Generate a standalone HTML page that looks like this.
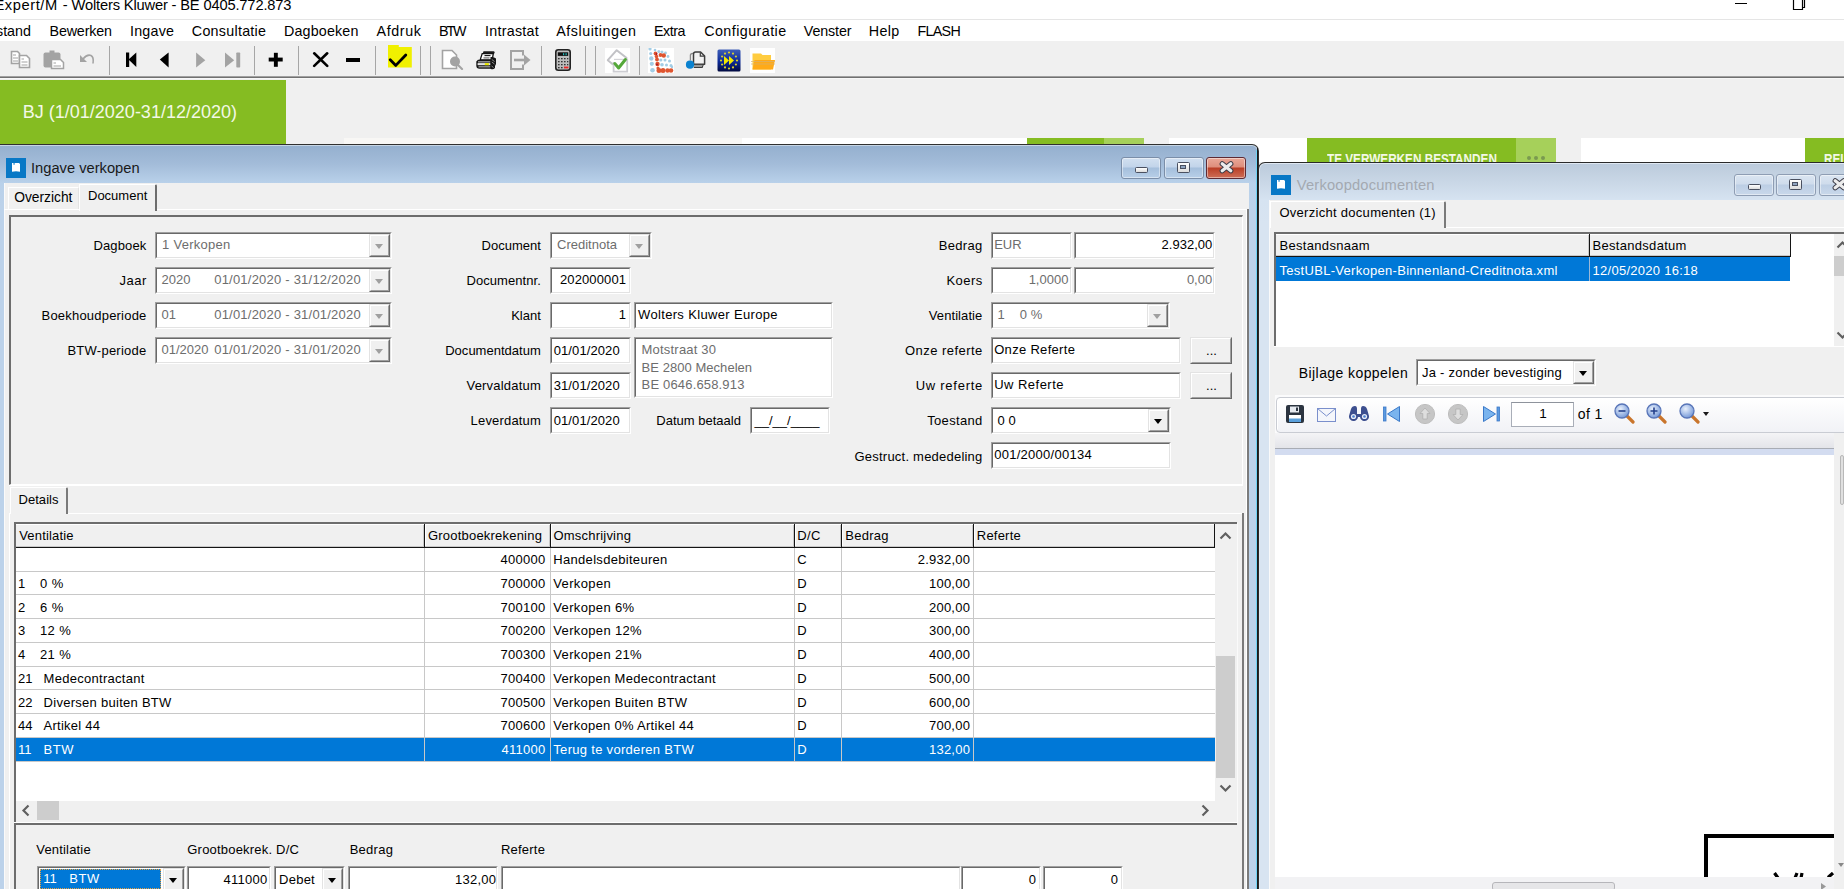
<!DOCTYPE html><html><head><meta charset="utf-8"><style>
*{margin:0;padding:0;box-sizing:border-box}
html,body{width:1844px;height:889px;overflow:hidden;background:#f0f0f0;position:relative;font-family:"Liberation Sans",sans-serif}
.t{position:absolute;white-space:nowrap;font-family:"Liberation Sans",sans-serif}
.r{position:absolute}
.sk{position:absolute;border-style:solid;border-width:1px;border-color:#a0a0a0 #fff #fff #a0a0a0}
.ski{position:absolute;left:0;top:0;right:0;bottom:0;border-style:solid;border-width:1px;border-color:#696969 #e3e3e3 #e3e3e3 #696969}
.rs{position:absolute;border-style:solid;border-width:1px;border-color:#e3e3e3 #696969 #696969 #e3e3e3}
.rsi{position:absolute;left:0;top:0;right:0;bottom:0;border-style:solid;border-width:1px;border-color:#fff #a0a0a0 #a0a0a0 #fff}
svg{position:absolute}
</style></head><body><div class="r" style="left:0px;top:0px;width:1844px;height:19px;background:#fff;"></div>
<div class="r" style="left:0px;top:19px;width:1844px;height:1px;background:#e5e5e5;"></div>
<div class="r" style="left:0px;top:20px;width:1844px;height:21px;background:#fff;"></div>
<div class="r" style="left:0px;top:41px;width:1844px;height:35px;background:#f0f0f0;"></div>
<div class="r" style="left:0px;top:76px;width:1844px;height:1px;background:#a0a0a0;"></div>
<div class="r" style="left:0px;top:77px;width:1844px;height:1px;background:#717171;"></div>
<div class="r" style="left:0px;top:78px;width:1844px;height:1px;background:#f7f7f7;"></div>
<div class="t" style="left:-5.5px;top:-2.44px;font-size:14.7px;line-height:14.7px;color:#000;font-weight:normal;letter-spacing:0.562px;">Expert/M</div>
<div class="t" style="left:62.8px;top:-2.44px;font-size:14.7px;line-height:14.7px;color:#000;font-weight:normal;letter-spacing:-0.162px;">- Wolters Kluwer - BE 0405.772.873</div>
<div class="r" style="left:1735px;top:3px;width:12px;height:1px;background:#000;"></div>
<svg style="left:1792px;top:0px" width="14" height="12"><path d="M1.5 -1 V9.5 H10.5 V-1 M10.5 7.5 H12.5 V-1" fill="none" stroke="#000" stroke-width="1.2"/></svg>
<div class="t" style="left:-4px;top:24.40px;font-size:14.3px;line-height:14.3px;color:#000;font-weight:normal;">stand</div>
<div class="t" style="left:49.5px;top:24.40px;font-size:14.3px;line-height:14.3px;color:#000;font-weight:normal;letter-spacing:-0.154px;">Bewerken</div>
<div class="t" style="left:130px;top:24.40px;font-size:14.3px;line-height:14.3px;color:#000;font-weight:normal;letter-spacing:0.215px;">Ingave</div>
<div class="t" style="left:191.8px;top:24.40px;font-size:14.3px;line-height:14.3px;color:#000;font-weight:normal;letter-spacing:0.267px;">Consultatie</div>
<div class="t" style="left:284px;top:24.40px;font-size:14.3px;line-height:14.3px;color:#000;font-weight:normal;letter-spacing:0.159px;">Dagboeken</div>
<div class="t" style="left:376.6px;top:24.40px;font-size:14.3px;line-height:14.3px;color:#000;font-weight:normal;letter-spacing:0.596px;">Afdruk</div>
<div class="t" style="left:439px;top:24.40px;font-size:14.3px;line-height:14.3px;color:#000;font-weight:normal;letter-spacing:-2.082px;">BTW</div>
<div class="t" style="left:485px;top:24.40px;font-size:14.3px;line-height:14.3px;color:#000;font-weight:normal;letter-spacing:0.256px;">Intrastat</div>
<div class="t" style="left:556.3px;top:24.40px;font-size:14.3px;line-height:14.3px;color:#000;font-weight:normal;letter-spacing:0.517px;">Afsluitingen</div>
<div class="t" style="left:654.1px;top:24.40px;font-size:14.3px;line-height:14.3px;color:#000;font-weight:normal;letter-spacing:-0.517px;">Extra</div>
<div class="t" style="left:704.2px;top:24.40px;font-size:14.3px;line-height:14.3px;color:#000;font-weight:normal;letter-spacing:0.446px;">Configuratie</div>
<div class="t" style="left:803.8px;top:24.40px;font-size:14.3px;line-height:14.3px;color:#000;font-weight:normal;letter-spacing:-0.130px;">Venster</div>
<div class="t" style="left:868.8px;top:24.40px;font-size:14.3px;line-height:14.3px;color:#000;font-weight:normal;letter-spacing:0.332px;">Help</div>
<div class="t" style="left:917.4px;top:24.40px;font-size:14.3px;line-height:14.3px;color:#000;font-weight:normal;letter-spacing:-0.670px;">FLASH</div>
<svg style="left:10px;top:50px" width="22" height="20" viewBox="0 0 22 20"><path d="M1.5 1.5 H7.5 L9.5 3.5 V13.5 H1.5 Z" fill="#fff" stroke="#a3a3a3" stroke-width="1.6"/><path d="M3 5 H6 M3 8 H8 M3 11 H8" stroke="#a3a3a3" stroke-width="1.2"/><path d="M9.5 5.5 H16.5 L19.5 8.5 V17.5 H9.5 Z" fill="#fff" stroke="#a3a3a3" stroke-width="1.6"/><path d="M11.5 9 H14 M11.5 12 H17.5 M11.5 15 H17.5" stroke="#a3a3a3" stroke-width="1.2"/></svg>
<svg style="left:42px;top:50px" width="23" height="20" viewBox="0 0 23 20"><rect x="1.5" y="2.5" width="17" height="15" rx="2" fill="#a3a3a3"/><rect x="7.5" y="0.5" width="5" height="3" fill="#a3a3a3"/><path d="M9.5 9.5 H18.5 L21.5 12.5 V18.5 H9.5 Z" fill="#fff" stroke="#a3a3a3" stroke-width="1.5"/><path d="M11.5 13 H14 M11.5 16 H19" stroke="#a3a3a3" stroke-width="1.2"/></svg>
<svg style="left:79px;top:53px" width="17" height="13" viewBox="0 0 17 13"><path d="M1 2 L1 9 L8 9 Z" fill="#a3a3a3"/><path d="M4 6 Q8 1 12 2.5 Q15 4 14 10.5" fill="none" stroke="#a3a3a3" stroke-width="1.6"/></svg>
<div class="r" style="left:109px;top:46px;width:1px;height:29px;background:#a6a6a6;"></div>
<svg style="left:125px;top:52px" width="13" height="16" viewBox="0 0 13 16"><rect x="1" y="0.5" width="3.2" height="14.5" fill="#000"/><path d="M3.5 7.5 L11.3 0.5 L11.3 15 Z" fill="#000"/></svg>
<svg style="left:159px;top:52px" width="11" height="16" viewBox="0 0 11 16"><path d="M0.8 7.6 L9.6 0.5 L9.6 15.6 Z" fill="#000"/></svg>
<svg style="left:195px;top:52px" width="11" height="16" viewBox="0 0 11 16"><path d="M1.1 0.5 L10.3 8.3 L1.1 15.6 Z" fill="#a3a3a3"/></svg>
<svg style="left:224px;top:52px" width="17" height="16" viewBox="0 0 17 16"><path d="M1 0.5 L10.2 8.2 L1 15.6 Z" fill="#a3a3a3"/><rect x="12.3" y="0.5" width="3.9" height="15" rx="0.8" fill="#a3a3a3"/></svg>
<div class="r" style="left:254px;top:46px;width:1px;height:29px;background:#a6a6a6;"></div>
<svg style="left:268px;top:52px" width="16" height="16" viewBox="0 0 16 16"><rect x="0.7" y="5.6" width="14" height="3.9" fill="#000"/><rect x="5.9" y="0.8" width="3.9" height="14" fill="#000"/></svg>
<div class="r" style="left:298px;top:46px;width:1px;height:29px;background:#a6a6a6;"></div>
<svg style="left:312px;top:51px" width="17" height="17" viewBox="0 0 17 17"><path d="M2.2 2.3 L15.2 14.9 M15.2 2.3 L2.2 14.9" stroke="#000" stroke-width="2.6" stroke-linecap="round"/></svg>
<div class="r" style="left:346px;top:57.6px;width:14px;height:4.4px;background:#000;"></div>
<div class="r" style="left:375px;top:46px;width:1px;height:29px;background:#a6a6a6;"></div>
<svg style="left:387px;top:44px" width="26" height="25" viewBox="0 0 26 25"><path d="M1 1 H11.8 V3 H24.8 V23.6 H1 Z" fill="#f0f000"/><path d="M3.2 15.8 L8.8 21.4 L18.8 11" fill="none" stroke="#000" stroke-width="2.8" stroke-linecap="round" stroke-linejoin="round"/></svg>
<div class="r" style="left:420px;top:46px;width:1px;height:29px;background:#a6a6a6;"></div>
<div class="r" style="left:430px;top:46px;width:1px;height:29px;background:#a6a6a6;"></div>
<svg style="left:441px;top:49px" width="23" height="21" viewBox="0 0 23 21"><path d="M1.5 1.5 H11 L15.5 6 V19.5 H1.5 Z" fill="#fff" stroke="#a3a3a3" stroke-width="1.6"/><circle cx="14" cy="12.5" r="5" fill="#a3a3a3"/><path d="M17 16 L21 20" stroke="#a3a3a3" stroke-width="2.2" stroke-linecap="round"/></svg>
<svg style="left:475px;top:49px" width="23" height="22" viewBox="0 0 23 22"><path d="M8.5 2.2 H18.5 Q19.6 2.2 19.6 3.6 L19 5 H7.5 Z" fill="#1a1a1a"/><path d="M7.2 4.6 H18.3 L17.2 10.8 H5.2 Z" fill="#fff" stroke="#111" stroke-width="1.3"/><path d="M9.5 6.6 H15.5" stroke="#111" stroke-width="1.1"/><path d="M8.5 8.9 H14.5" stroke="#777" stroke-width="1.3"/><path d="M3 10.8 H16.5 V19.7 H4.5 Q1.3 19.7 1.3 16.5 V12.5 Z" fill="#151515"/><rect x="3" y="12" width="12.5" height="1.6" fill="#8a8a8a"/><rect x="2.6" y="14.1" width="13" height="2.1" fill="#e4e4e4"/><rect x="9.8" y="14.1" width="4.1" height="2.1" fill="#e6e600"/><rect x="3.5" y="17" width="12" height="1.5" fill="#8a8a8a"/><path d="M15.5 8 Q19 7.5 21 9.5 V15 L20 17 V19 Q18 21 15.5 19.7 Z" fill="#151515"/><path d="M16.8 10.5 L19.5 12.5 M16.8 13 L19.5 15 M16.5 17 L18.5 18.5" stroke="#888" stroke-width="1"/></svg>
<svg style="left:509px;top:49px" width="23" height="22" viewBox="0 0 23 22"><path d="M14 6.5 V2 H2 V20 H14 V15.5" fill="none" stroke="#a3a3a3" stroke-width="2"/><path d="M5 11 H16" stroke="#a3a3a3" stroke-width="2.6"/><path d="M15 5.5 L21.5 11 L15 16.5 Z" fill="#a3a3a3"/></svg>
<div class="r" style="left:541px;top:46px;width:1px;height:29px;background:#a6a6a6;"></div>
<svg style="left:555px;top:49px" width="16" height="22" viewBox="0 0 16 22"><rect x="0.8" y="0.8" width="14.4" height="20.4" rx="2.5" fill="#bdbdbd" stroke="#222" stroke-width="1.6"/><rect x="2.8" y="3.3" width="10.4" height="3.6" fill="#111"/><rect x="8" y="4.2" width="1.2" height="2" fill="#2bb"/><rect x="10.5" y="4.2" width="1.2" height="2" fill="#2bb"/><g fill="#333"><rect x="3" y="9" width="1.6" height="1.3"/><rect x="6" y="9" width="1.6" height="1.3"/><rect x="9" y="9" width="1.6" height="1.3"/><rect x="12" y="9" width="1.3" height="1.3"/><rect x="3" y="12" width="1.6" height="1.3"/><rect x="6" y="12" width="1.6" height="1.3"/><rect x="9" y="12" width="1.6" height="1.3"/><rect x="12" y="12" width="1.3" height="1.3"/><rect x="3" y="15" width="1.6" height="1.3"/><rect x="6" y="15" width="1.6" height="1.3"/><rect x="9" y="15" width="1.6" height="1.3"/><rect x="12" y="15" width="1.3" height="1.3"/><rect x="3" y="18" width="1.6" height="1.3"/><rect x="6" y="18" width="1.6" height="1.3"/></g><rect x="9" y="17.6" width="4.4" height="1.8" fill="#e22"/></svg>
<div class="r" style="left:585px;top:46px;width:1px;height:29px;background:#a6a6a6;"></div>
<div class="r" style="left:595px;top:46px;width:1px;height:29px;background:#a6a6a6;"></div>
<div class="r" style="left:605px;top:48px;width:25px;height:25px;background:#fff;"></div>
<svg style="left:605px;top:48px" width="25" height="25" viewBox="0 0 25 25"><path d="M8 16.5 L2.8 12.2 L11.7 2.2 L22 10.3" fill="none" stroke="#c2c2c6" stroke-width="2" stroke-linejoin="round"/><path d="M9 11.4 H22" stroke="#d4d4d8" stroke-width="1.2"/><path d="M8.6 14 V23.6 H22.2 V10.6" fill="none" stroke="#cdcdd2" stroke-width="1.8"/><path d="M9.8 15.6 L13.6 20 L20.4 11.5" fill="none" stroke="#55a83a" stroke-width="3" stroke-linecap="round" stroke-linejoin="round"/></svg>
<div class="r" style="left:639px;top:46px;width:1px;height:29px;background:#a6a6a6;"></div>
<div class="r" style="left:648px;top:48px;width:26px;height:25px;background:#fff;"></div>
<svg style="left:648px;top:48px" width="26" height="25" viewBox="0 0 26 25"><circle cx="2.0" cy="1.0" r="1.6" fill="#a3cde5"/><circle cx="2.7" cy="5.5" r="1.6" fill="#a3cde5"/><circle cx="3.3" cy="10.5" r="2.2" fill="#a3cde5"/><circle cx="3.8" cy="15.8" r="2.1" fill="#a3cde5"/><circle cx="4.5" cy="22.2" r="2.3" fill="#a3cde5"/><circle cx="7.0" cy="2.0" r="1.3" fill="#a3cde5"/><circle cx="10.8" cy="3.5" r="1.5" fill="#a3cde5"/><circle cx="14.0" cy="4.0" r="1.5" fill="#a3cde5"/><circle cx="17.5" cy="5.0" r="1.4" fill="#a3cde5"/><circle cx="20.0" cy="8.5" r="1.4" fill="#a3cde5"/><circle cx="21.5" cy="13.0" r="1.5" fill="#a3cde5"/><circle cx="23.0" cy="17.5" r="1.5" fill="#a3cde5"/><circle cx="12.8" cy="12.0" r="1.6" fill="#a3cde5"/><circle cx="17.0" cy="12.0" r="1.5" fill="#a3cde5"/><circle cx="14.0" cy="16.8" r="1.8" fill="#a3cde5"/><circle cx="18.5" cy="17.0" r="1.5" fill="#a3cde5"/><circle cx="24.0" cy="19.0" r="1.2" fill="#a3cde5"/><circle cx="7.5" cy="5.5" r="1.9" fill="#df5530"/><circle cx="8.5" cy="8.5" r="1.8" fill="#df5530"/><circle cx="9.0" cy="11.5" r="1.9" fill="#df5530"/><circle cx="9.5" cy="16.0" r="2.2" fill="#df5530"/><circle cx="10.0" cy="20.0" r="1.6" fill="#df5530"/><circle cx="12.5" cy="7.0" r="1.9" fill="#df5530"/><circle cx="15.8" cy="7.5" r="2.2" fill="#df5530"/><circle cx="11.0" cy="22.5" r="2.5" fill="#df5530"/><circle cx="15.0" cy="22.5" r="2.5" fill="#df5530"/><circle cx="19.5" cy="22.5" r="2.2" fill="#df5530"/><circle cx="23.0" cy="22.5" r="2.3" fill="#df5530"/><circle cx="8.5" cy="6" r="0.9" fill="#a8182a"/><circle cx="9" cy="16.5" r="1" fill="#a8182a"/></svg>
<svg style="left:684px;top:49px" width="23" height="21" viewBox="0 0 23 21"><path d="M6.4 11.5 V6.5 Q6.4 4.3 8.6 4.3 H9.5" fill="none" stroke="#8a8a8a" stroke-width="1.3"/><path d="M9.5 15.2 V5.2 Q9.5 3 11.7 3 H16.6 L20.6 7 V15.2 Z" fill="#f2f2f2" stroke="#3c3c3c" stroke-width="1.5" stroke-linejoin="round"/><path d="M16.3 3.4 V7.2 H20.3" fill="none" stroke="#3c3c3c" stroke-width="1.2"/><rect x="10" y="15.9" width="8.6" height="2.4" fill="#9a9a9a"/><path d="M9.8 18.5 H18.2 L19.2 15.9" fill="none" stroke="#3c3c3c" stroke-width="1.1"/><circle cx="6" cy="15.7" r="4.1" fill="#0a82d0"/></svg>
<svg style="left:717px;top:49px" width="24" height="23" viewBox="0 0 24 23"><defs><linearGradient id="eug" x1="0" y1="0" x2="0" y2="1"><stop offset="0" stop-color="#3f5fb8"/><stop offset="0.55" stop-color="#0b2a98"/><stop offset="1" stop-color="#020a40"/></linearGradient></defs><rect x="0.5" y="0.5" width="23" height="22" rx="1.5" fill="url(#eug)"/><circle cx="20.00" cy="11.50" r="1.1" fill="#d8cf30"/><circle cx="18.93" cy="15.50" r="1.1" fill="#d8cf30"/><circle cx="16.00" cy="18.43" r="1.1" fill="#d8cf30"/><circle cx="12.00" cy="19.50" r="1.1" fill="#d8cf30"/><circle cx="8.00" cy="18.43" r="1.1" fill="#d8cf30"/><circle cx="5.07" cy="15.50" r="1.1" fill="#d8cf30"/><circle cx="4.00" cy="11.50" r="1.1" fill="#d8cf30"/><circle cx="5.07" cy="7.50" r="1.1" fill="#d8cf30"/><circle cx="8.00" cy="4.57" r="1.1" fill="#d8cf30"/><circle cx="12.00" cy="3.50" r="1.1" fill="#d8cf30"/><circle cx="16.00" cy="4.57" r="1.1" fill="#d8cf30"/><circle cx="18.93" cy="7.50" r="1.1" fill="#d8cf30"/><path d="M7 7 L12 11.5 L7 16 Z M12 7 L17 11.5 L12 16 Z" fill="#f2e800"/></svg>
<div class="r" style="left:750px;top:48px;width:25px;height:25px;background:#fff;"></div>
<svg style="left:750px;top:48px" width="25" height="25" viewBox="0 0 25 25"><path d="M2.5 5.5 H11 L12.5 7 H21 V21.5 H2.5 Z" fill="#ffcc40"/><path d="M4.5 12 H25 L23 21.5 H2.5 Z" fill="#ffaa18"/><path d="M1 13.5 H25 M1 16 H25" stroke="#d8b070" stroke-width="1" opacity="0.7"/></svg>
<div class="r" style="left:0px;top:80px;width:286px;height:64px;background:#85bc22;"></div>
<div class="t" style="left:22.8px;top:103.16px;font-size:18px;line-height:18px;color:#f3f8e6;font-weight:normal;">BJ (1/01/2020-31/12/2020)</div>
<div class="r" style="left:344px;top:138px;width:398px;height:6px;background:#f8f7f5;"></div>
<div class="r" style="left:742px;top:138px;width:285px;height:6px;background:#fff;"></div>
<div class="r" style="left:1027px;top:138px;width:77px;height:6px;background:#85bc22;"></div>
<div class="r" style="left:1104px;top:138px;width:40px;height:6px;background:#a6d05a;"></div>
<div class="r" style="left:1169px;top:138px;width:138px;height:24px;background:#fff;"></div>
<div class="r" style="left:1307px;top:138px;width:209px;height:24px;background:#85bc22;"></div>
<div class="r" style="left:1516px;top:138px;width:40px;height:24px;background:#a6d05a;"></div>
<div class="r" style="left:1581px;top:138px;width:224px;height:24px;background:#fff;"></div>
<div class="r" style="left:1805px;top:138px;width:39px;height:24px;background:#85bc22;"></div>
<div class="t" style="left:1326.5px;top:150.80px;font-size:15px;line-height:15px;color:#f3f8e6;font-weight:bold;transform:scaleX(0.783);transform-origin:0 0">TE VERWERKEN BESTANDEN</div>
<div class="t" style="left:1824px;top:150.80px;font-size:15px;line-height:15px;color:#f3f8e6;font-weight:bold;transform:scaleX(0.783);transform-origin:0 0">REI</div>
<div class="r" style="left:1526.5px;top:155.5px;width:4.6px;height:4.6px;background:#7a9a50;border-radius:50%"></div>
<div class="r" style="left:1533.5px;top:155.5px;width:4.6px;height:4.6px;background:#7a9a50;border-radius:50%"></div>
<div class="r" style="left:1540.5px;top:155.5px;width:4.6px;height:4.6px;background:#7a9a50;border-radius:50%"></div>
<div class="r" style="left:-10px;top:144px;width:1269px;height:760px;background:#303030;border-radius:0 7px 0 0"></div>
<div class="r" style="left:-9px;top:145px;width:1267px;height:760px;background:#c6d5e4;border-radius:0 6px 0 0"></div>
<div class="r" style="left:-9px;top:146px;width:1266px;height:760px;background:linear-gradient(#95b0cf 0px,#a3bcd9 18px,#b9d1ea 37px,#bcd2ea 60px);border-radius:0 5px 0 0"></div>
<div class="r" style="left:1256px;top:150px;width:1px;height:739px;background:#6fd3f5;"></div>
<div class="r" style="left:1257px;top:148px;width:1px;height:741px;background:#1a1a1a;"></div>
<div class="r" style="left:4px;top:183px;width:1245px;height:706px;background:#f0f0f0;"></div>
<div class="r" style="left:4px;top:183px;width:1px;height:706px;background:#fafafa;"></div>
<div class="r" style="left:1247px;top:209px;width:2px;height:680px;background:#7c7c7c;"></div>
<div class="r" style="left:1246px;top:210px;width:1px;height:679px;background:#fff;"></div>
<div class="r" style="left:6px;top:158px;width:20px;height:20px;background:#0878c6;"></div>
<svg style="left:12px;top:163px" width="9" height="10"><path d="M0 0 H1.5 V1.8 H2.6 V0 H7 L8 1 V8.8 Q4 7.6 0 8.8 Z" fill="#fff"/></svg>
<div class="t" style="left:31px;top:161.06px;font-size:14.7px;line-height:14.7px;color:#1a1a1a;font-weight:normal;">Ingave verkopen</div>
<div class="r" style="left:1121px;top:157px;width:40px;height:22px;background:linear-gradient(#d2e0f0 0%,#c2d4ea 45%,#a5bfdc 50%,#b8cfe8 100%);border:1px solid #7b8ea8;border-radius:3px;box-shadow:inset 0 0 0 1px rgba(255,255,255,0.45)"></div>
<div class="r" style="left:1134.5px;top:166.7px;width:13.5px;height:6px;background:linear-gradient(#fff,#dcdcdc);border:1.3px solid #4a5060;border-radius:1.5px"></div>
<div class="r" style="left:1164px;top:157px;width:40px;height:22px;background:linear-gradient(#d2e0f0 0%,#c2d4ea 45%,#a5bfdc 50%,#b8cfe8 100%);border:1px solid #7b8ea8;border-radius:3px;box-shadow:inset 0 0 0 1px rgba(255,255,255,0.45)"></div>
<div class="r" style="left:1176.5px;top:161.8px;width:13.5px;height:10.8px;background:linear-gradient(#fff,#dcdcdc);border:1.3px solid #4a5060;border-radius:1.5px"></div>
<div class="r" style="left:1179.8px;top:165.2px;width:6.5px;height:3.6px;background:#8fa4c0;border:1px solid #4a5060"></div>
<div class="r" style="left:1206px;top:157px;width:40px;height:22px;background:linear-gradient(#eaa898 0%,#de8e7c 45%,#ba3e26 50%,#cd6e58 100%);border:1px solid #5e2a34;border-radius:3px;box-shadow:inset 0 0 0 1px rgba(255,255,255,0.45)"></div>
<svg style="left:1217.5px;top:161.0px" width="17" height="13"><path d="M4.2 2.8 L12.8 9.8 M12.8 2.8 L4.2 9.8" stroke="#3c3c48" stroke-width="5.2" stroke-linecap="round"/><path d="M4.2 2.8 L12.8 9.8 M12.8 2.8 L4.2 9.8" stroke="#ececec" stroke-width="3.2" stroke-linecap="round"/></svg>
<div class="r" style="left:4px;top:209px;width:1243px;height:1px;background:#fff;"></div>
<div class="r" style="left:8px;top:187px;width:71px;height:22px;border-left:1px solid #fff;border-top:1px solid #fff;border-right:1px solid #e3e3e3;background:#f0f0f0"></div>
<div class="t" style="left:14.2px;top:191.02px;font-size:13.8px;line-height:13.8px;color:#000;font-weight:normal;">Overzicht</div>
<div class="r" style="left:79px;top:184px;width:78px;height:27px;border-left:1px solid #fff;border-top:1px solid #fff;border-right:2px solid #6d6d6d;background:#f0f0f0;border-radius:0 2px 0 0"></div>
<div class="t" style="left:88px;top:189.00px;font-size:13px;line-height:13px;color:#000;font-weight:normal;">Document</div>
<div class="r" style="left:9px;top:215px;width:1234px;height:270px;border-left:2px solid #6d6d6d;border-top:2px solid #6d6d6d;border-right:1px solid #fff;border-bottom:1px solid #fff"></div>
<div class="t" style="right:1697.7px;top:239.00px;font-size:13px;line-height:13px;color:#000;font-weight:normal;letter-spacing:0.127px;margin-right:-0.127px;">Dagboek</div>
<div class="t" style="right:1697.7px;top:274.00px;font-size:13px;line-height:13px;color:#000;font-weight:normal;letter-spacing:0.504px;margin-right:-0.504px;">Jaar</div>
<div class="t" style="right:1697.7px;top:309.00px;font-size:13px;line-height:13px;color:#000;font-weight:normal;letter-spacing:0.206px;margin-right:-0.206px;">Boekhoudperiode</div>
<div class="t" style="right:1697.7px;top:344.00px;font-size:13px;line-height:13px;color:#000;font-weight:normal;letter-spacing:0.256px;margin-right:-0.256px;">BTW-periode</div>
<div class="sk" style="left:155px;top:232px;width:237px;height:27px;background:#fff"><div class="ski"></div></div>
<div class="rs" style="left:369px;top:234px;width:21px;height:23px;background:#f0f0f0"><div class="rsi"></div></div>
<div class="r" style="left:374.5px;top:243.5px;width:0;height:0;border-left:4.5px solid transparent;border-right:4.5px solid transparent;border-top:5px solid #a0a0a0"></div>
<div class="sk" style="left:155px;top:267px;width:237px;height:27px;background:#fff"><div class="ski"></div></div>
<div class="rs" style="left:369px;top:269px;width:21px;height:23px;background:#f0f0f0"><div class="rsi"></div></div>
<div class="r" style="left:374.5px;top:278.5px;width:0;height:0;border-left:4.5px solid transparent;border-right:4.5px solid transparent;border-top:5px solid #a0a0a0"></div>
<div class="sk" style="left:155px;top:302px;width:237px;height:27px;background:#fff"><div class="ski"></div></div>
<div class="rs" style="left:369px;top:304px;width:21px;height:23px;background:#f0f0f0"><div class="rsi"></div></div>
<div class="r" style="left:374.5px;top:313.5px;width:0;height:0;border-left:4.5px solid transparent;border-right:4.5px solid transparent;border-top:5px solid #a0a0a0"></div>
<div class="sk" style="left:155px;top:337px;width:237px;height:27px;background:#fff"><div class="ski"></div></div>
<div class="rs" style="left:369px;top:339px;width:21px;height:23px;background:#f0f0f0"><div class="rsi"></div></div>
<div class="r" style="left:374.5px;top:348.5px;width:0;height:0;border-left:4.5px solid transparent;border-right:4.5px solid transparent;border-top:5px solid #a0a0a0"></div>
<div class="t" style="left:162px;top:238.00px;font-size:13px;line-height:13px;color:#6d6d6d;font-weight:normal;letter-spacing:0.281px;">1 Verkopen</div>
<div class="t" style="left:161.5px;top:273.00px;font-size:13px;line-height:13px;color:#6d6d6d;font-weight:normal;">2020</div>
<div class="t" style="left:214.2px;top:273.00px;font-size:13px;line-height:13px;color:#6d6d6d;font-weight:normal;letter-spacing:0.219px;">01/01/2020 - 31/12/2020</div>
<div class="t" style="left:161.5px;top:308.00px;font-size:13px;line-height:13px;color:#6d6d6d;font-weight:normal;">01</div>
<div class="t" style="left:214.2px;top:308.00px;font-size:13px;line-height:13px;color:#6d6d6d;font-weight:normal;letter-spacing:0.219px;">01/01/2020 - 31/01/2020</div>
<div class="t" style="left:161.5px;top:343.00px;font-size:13px;line-height:13px;color:#6d6d6d;font-weight:normal;">01/2020</div>
<div class="t" style="left:214.2px;top:343.00px;font-size:13px;line-height:13px;color:#6d6d6d;font-weight:normal;letter-spacing:0.219px;">01/01/2020 - 31/01/2020</div>
<div class="t" style="right:1303.2px;top:239.00px;font-size:13px;line-height:13px;color:#000;font-weight:normal;">Document</div>
<div class="t" style="right:1303.2px;top:274.00px;font-size:13px;line-height:13px;color:#000;font-weight:normal;letter-spacing:0.060px;margin-right:-0.060px;">Documentnr.</div>
<div class="t" style="right:1303.2px;top:309.00px;font-size:13px;line-height:13px;color:#000;font-weight:normal;">Klant</div>
<div class="t" style="right:1303.2px;top:344.00px;font-size:13px;line-height:13px;color:#000;font-weight:normal;letter-spacing:0.018px;margin-right:-0.018px;">Documentdatum</div>
<div class="t" style="right:1303.2px;top:379.00px;font-size:13px;line-height:13px;color:#000;font-weight:normal;letter-spacing:0.204px;margin-right:-0.204px;">Vervaldatum</div>
<div class="t" style="right:1303.2px;top:414.00px;font-size:13px;line-height:13px;color:#000;font-weight:normal;letter-spacing:0.172px;margin-right:-0.172px;">Leverdatum</div>
<div class="sk" style="left:550px;top:232px;width:102px;height:27px;background:#fff"><div class="ski"></div></div>
<div class="rs" style="left:629px;top:234px;width:21px;height:23px;background:#f0f0f0"><div class="rsi"></div></div>
<div class="r" style="left:634.5px;top:243.5px;width:0;height:0;border-left:4.5px solid transparent;border-right:4.5px solid transparent;border-top:5px solid #a0a0a0"></div>
<div class="t" style="left:557px;top:238.20px;font-size:13px;line-height:13px;color:#6d6d6d;font-weight:normal;">Creditnota</div>
<div class="sk" style="left:550px;top:267px;width:81px;height:27px;background:#fff"><div class="ski"></div></div>
<div class="t" style="right:1218px;top:273.20px;font-size:13px;line-height:13px;color:#000;font-weight:normal;letter-spacing:0.116px;margin-right:-0.116px;">202000001</div>
<div class="sk" style="left:550px;top:302px;width:81px;height:27px;background:#fff"><div class="ski"></div></div>
<div class="t" style="right:1218px;top:308.20px;font-size:13px;line-height:13px;color:#000;font-weight:normal;">1</div>
<div class="sk" style="left:634px;top:302px;width:199px;height:27px;background:#fff"><div class="ski"></div></div>
<div class="t" style="left:638px;top:308.00px;font-size:13px;line-height:13px;color:#000;font-weight:normal;letter-spacing:0.340px;">Wolters Kluwer Europe</div>
<div class="sk" style="left:550px;top:337px;width:81px;height:27px;background:#fff"><div class="ski"></div></div>
<div class="t" style="left:553.7px;top:343.50px;font-size:13px;line-height:13px;color:#000;font-weight:normal;letter-spacing:0.104px;">01/01/2020</div>
<div class="sk" style="left:634px;top:337px;width:199px;height:61px;background:#fff"><div class="ski"></div></div>
<div class="t" style="left:641.6px;top:343.40px;font-size:13px;line-height:13px;color:#6d6d6d;font-weight:normal;letter-spacing:0.195px;">Motstraat 30</div>
<div class="t" style="left:641.6px;top:360.50px;font-size:13px;line-height:13px;color:#6d6d6d;font-weight:normal;letter-spacing:0.043px;">BE 2800 Mechelen</div>
<div class="t" style="left:641.6px;top:377.80px;font-size:13px;line-height:13px;color:#6d6d6d;font-weight:normal;letter-spacing:0.166px;">BE 0646.658.913</div>
<div class="sk" style="left:550px;top:372px;width:81px;height:27px;background:#fff"><div class="ski"></div></div>
<div class="t" style="left:553.7px;top:378.50px;font-size:13px;line-height:13px;color:#000;font-weight:normal;letter-spacing:0.104px;">31/01/2020</div>
<div class="sk" style="left:550px;top:407px;width:81px;height:27px;background:#fff"><div class="ski"></div></div>
<div class="t" style="left:553.7px;top:413.50px;font-size:13px;line-height:13px;color:#000;font-weight:normal;letter-spacing:0.104px;">01/01/2020</div>
<div class="t" style="right:1103.1px;top:414.00px;font-size:13px;line-height:13px;color:#000;font-weight:normal;">Datum betaald</div>
<div class="sk" style="left:750px;top:407px;width:80px;height:27px;background:#fff"><div class="ski"></div></div>
<div class="t" style="left:754.5px;top:413.50px;font-size:13px;line-height:13px;color:#000;font-weight:normal;">__/__/____</div>
<div class="t" style="right:861.7px;top:239.00px;font-size:13px;line-height:13px;color:#000;font-weight:normal;letter-spacing:0.336px;margin-right:-0.336px;">Bedrag</div>
<div class="t" style="right:861.7px;top:274.00px;font-size:13px;line-height:13px;color:#000;font-weight:normal;letter-spacing:0.485px;margin-right:-0.485px;">Koers</div>
<div class="t" style="right:861.7px;top:309.00px;font-size:13px;line-height:13px;color:#000;font-weight:normal;letter-spacing:0.082px;margin-right:-0.082px;">Ventilatie</div>
<div class="t" style="right:861.7px;top:344.00px;font-size:13px;line-height:13px;color:#000;font-weight:normal;letter-spacing:0.459px;margin-right:-0.459px;">Onze referte</div>
<div class="t" style="right:861.7px;top:379.00px;font-size:13px;line-height:13px;color:#000;font-weight:normal;letter-spacing:0.738px;margin-right:-0.738px;">Uw referte</div>
<div class="t" style="right:861.7px;top:414.00px;font-size:13px;line-height:13px;color:#000;font-weight:normal;letter-spacing:0.334px;margin-right:-0.334px;">Toestand</div>
<div class="t" style="right:861.7px;top:449.50px;font-size:13px;line-height:13px;color:#000;font-weight:normal;letter-spacing:0.223px;margin-right:-0.223px;">Gestruct. mededeling</div>
<div class="sk" style="left:991px;top:232px;width:81px;height:27px;background:#fff"><div class="ski"></div></div>
<div class="t" style="left:994.2px;top:238.00px;font-size:13px;line-height:13px;color:#6d6d6d;font-weight:normal;">EUR</div>
<div class="sk" style="left:1074px;top:232px;width:141px;height:27px;background:#fff"><div class="ski"></div></div>
<div class="t" style="right:631.8px;top:238.20px;font-size:13px;line-height:13px;color:#000;font-weight:normal;">2.932,00</div>
<div class="sk" style="left:991px;top:267px;width:81px;height:27px;background:#fff"><div class="ski"></div></div>
<div class="t" style="right:775.5999999999999px;top:273.20px;font-size:13px;line-height:13px;color:#6d6d6d;font-weight:normal;">1,0000</div>
<div class="sk" style="left:1074px;top:267px;width:141px;height:27px;background:#fff"><div class="ski"></div></div>
<div class="t" style="right:631.8px;top:273.20px;font-size:13px;line-height:13px;color:#6d6d6d;font-weight:normal;">0,00</div>
<div class="sk" style="left:991px;top:302px;width:179px;height:27px;background:#fff"><div class="ski"></div></div>
<div class="rs" style="left:1147px;top:304px;width:21px;height:23px;background:#f0f0f0"><div class="rsi"></div></div>
<div class="r" style="left:1152.5px;top:313.5px;width:0;height:0;border-left:4.5px solid transparent;border-right:4.5px solid transparent;border-top:5px solid #a0a0a0"></div>
<div class="t" style="left:997.6px;top:308.20px;font-size:13px;line-height:13px;color:#6d6d6d;font-weight:normal;">1</div>
<div class="t" style="left:1019.8px;top:308.20px;font-size:13px;line-height:13px;color:#6d6d6d;font-weight:normal;">0 %</div>
<div class="sk" style="left:991px;top:337px;width:190px;height:27px;background:#fff"><div class="ski"></div></div>
<div class="t" style="left:994.2px;top:343.20px;font-size:13px;line-height:13px;color:#000;font-weight:normal;letter-spacing:0.308px;">Onze Referte</div>
<div class="rs" style="left:1190px;top:337px;width:42px;height:27px;background:#f0f0f0"><div class="rsi"></div></div>
<div class="t" style="left:1211.5px;transform:translateX(-50%);top:343.50px;font-size:13px;line-height:13px;color:#000;font-weight:normal;">...</div>
<div class="sk" style="left:991px;top:372px;width:190px;height:27px;background:#fff"><div class="ski"></div></div>
<div class="t" style="left:994.2px;top:378.20px;font-size:13px;line-height:13px;color:#000;font-weight:normal;letter-spacing:0.476px;">Uw Referte</div>
<div class="rs" style="left:1190px;top:372px;width:42px;height:27px;background:#f0f0f0"><div class="rsi"></div></div>
<div class="t" style="left:1211.5px;transform:translateX(-50%);top:378.50px;font-size:13px;line-height:13px;color:#000;font-weight:normal;">...</div>
<div class="sk" style="left:991px;top:407px;width:180px;height:27px;background:#fff"><div class="ski"></div></div>
<div class="rs" style="left:1148px;top:409px;width:21px;height:23px;background:#f0f0f0"><div class="rsi"></div></div>
<div class="r" style="left:1153.5px;top:418.5px;width:0;height:0;border-left:4.5px solid transparent;border-right:4.5px solid transparent;border-top:5px solid #000"></div>
<div class="t" style="left:997.6px;top:414.00px;font-size:13px;line-height:13px;color:#000;font-weight:normal;">0 0</div>
<div class="sk" style="left:991px;top:442px;width:180px;height:27px;background:#fff"><div class="ski"></div></div>
<div class="t" style="left:994.2px;top:448.40px;font-size:13px;line-height:13px;color:#000;font-weight:normal;letter-spacing:0.271px;">001/2000/00134</div>
<div class="r" style="left:9px;top:485px;width:1234px;height:1px;background:#fff;"></div>
<div class="r" style="left:10px;top:487px;width:58px;height:27px;border-left:1px solid #fff;border-top:1px solid #fff;border-right:2px solid #7a7a7a;border-radius:0 2px 0 0;background:#f0f0f0"></div>
<div class="t" style="left:18.5px;top:493.00px;font-size:13px;line-height:13px;color:#000;font-weight:normal;letter-spacing:0.044px;">Details</div>
<div class="r" style="left:68px;top:513px;width:1175px;height:1px;background:#fff;"></div>
<div class="r" style="left:9px;top:513px;width:1px;height:376px;background:#fff;"></div>
<div class="r" style="left:1242px;top:513px;width:2px;height:376px;background:#7a7a7a;"></div>
<div class="r" style="left:1237px;top:523px;width:1px;height:300px;background:#fafafa;"></div>
<div class="r" style="left:14px;top:522px;width:1223px;height:301px;border-left:2px solid #6d6d6d;border-top:2px solid #6d6d6d;background:#fff"></div>
<div class="r" style="left:16px;top:524px;width:1199px;height:23px;background:#f0f0f0;"></div>
<div class="r" style="left:16px;top:524px;width:1199px;height:1px;background:#fff;"></div>
<div class="r" style="left:16px;top:546px;width:1199px;height:1px;background:#c8c8c8;"></div>
<div class="r" style="left:16px;top:547px;width:1199px;height:1px;background:#141414;"></div>
<div class="r" style="left:424px;top:524px;width:1px;height:23px;background:#141414;"></div>
<div class="r" style="left:423px;top:525px;width:1px;height:21px;background:#c8c8c8;"></div>
<div class="r" style="left:425px;top:525px;width:1px;height:21px;background:#fff;"></div>
<div class="r" style="left:550px;top:524px;width:1px;height:23px;background:#141414;"></div>
<div class="r" style="left:549px;top:525px;width:1px;height:21px;background:#c8c8c8;"></div>
<div class="r" style="left:551px;top:525px;width:1px;height:21px;background:#fff;"></div>
<div class="r" style="left:794px;top:524px;width:1px;height:23px;background:#141414;"></div>
<div class="r" style="left:793px;top:525px;width:1px;height:21px;background:#c8c8c8;"></div>
<div class="r" style="left:795px;top:525px;width:1px;height:21px;background:#fff;"></div>
<div class="r" style="left:841px;top:524px;width:1px;height:23px;background:#141414;"></div>
<div class="r" style="left:840px;top:525px;width:1px;height:21px;background:#c8c8c8;"></div>
<div class="r" style="left:842px;top:525px;width:1px;height:21px;background:#fff;"></div>
<div class="r" style="left:973px;top:524px;width:1px;height:23px;background:#141414;"></div>
<div class="r" style="left:972px;top:525px;width:1px;height:21px;background:#c8c8c8;"></div>
<div class="r" style="left:974px;top:525px;width:1px;height:21px;background:#fff;"></div>
<div class="r" style="left:1214px;top:524px;width:1px;height:23px;background:#141414;"></div>
<div class="t" style="left:19.2px;top:529.00px;font-size:13px;line-height:13px;color:#000;font-weight:normal;letter-spacing:0.176px;">Ventilatie</div>
<div class="t" style="left:428px;top:529.00px;font-size:13px;line-height:13px;color:#000;font-weight:normal;letter-spacing:0.207px;">Grootboekrekening</div>
<div class="t" style="left:553.5px;top:529.00px;font-size:13px;line-height:13px;color:#000;font-weight:normal;letter-spacing:0.205px;">Omschrijving</div>
<div class="t" style="left:797.3px;top:529.00px;font-size:13px;line-height:13px;color:#000;font-weight:normal;letter-spacing:0.336px;">D/C</div>
<div class="t" style="left:845.3px;top:529.00px;font-size:13px;line-height:13px;color:#000;font-weight:normal;letter-spacing:0.252px;">Bedrag</div>
<div class="t" style="left:976.8px;top:529.00px;font-size:13px;line-height:13px;color:#000;font-weight:normal;letter-spacing:0.213px;">Referte</div>
<div class="r" style="left:16px;top:738px;width:1199px;height:23px;background:#0078d7;"></div>
<div class="r" style="left:16px;top:571px;width:1199px;height:1px;background:#c8c8c8;"></div>
<div class="r" style="left:16px;top:594px;width:1199px;height:1px;background:#c8c8c8;"></div>
<div class="r" style="left:16px;top:618px;width:1199px;height:1px;background:#c8c8c8;"></div>
<div class="r" style="left:16px;top:642px;width:1199px;height:1px;background:#c8c8c8;"></div>
<div class="r" style="left:16px;top:666px;width:1199px;height:1px;background:#c8c8c8;"></div>
<div class="r" style="left:16px;top:689px;width:1199px;height:1px;background:#c8c8c8;"></div>
<div class="r" style="left:16px;top:713px;width:1199px;height:1px;background:#c8c8c8;"></div>
<div class="r" style="left:16px;top:737px;width:1199px;height:1px;background:#c8c8c8;"></div>
<div class="r" style="left:16px;top:761px;width:1199px;height:1px;background:#c8c8c8;"></div>
<div class="r" style="left:424px;top:548px;width:1px;height:214px;background:#c8c8c8;"></div>
<div class="r" style="left:550px;top:548px;width:1px;height:214px;background:#c8c8c8;"></div>
<div class="r" style="left:794px;top:548px;width:1px;height:214px;background:#c8c8c8;"></div>
<div class="r" style="left:841px;top:548px;width:1px;height:214px;background:#c8c8c8;"></div>
<div class="r" style="left:973px;top:548px;width:1px;height:214px;background:#c8c8c8;"></div>
<div class="t" style="right:1298.7px;top:553.20px;font-size:13px;line-height:13px;color:#000;font-weight:normal;letter-spacing:0.260px;margin-right:-0.260px;">400000</div>
<div class="t" style="left:553.3px;top:553.20px;font-size:13px;line-height:13px;color:#000;font-weight:normal;letter-spacing:0.307px;">Handelsdebiteuren</div>
<div class="t" style="left:797.3px;top:553.20px;font-size:13px;line-height:13px;color:#000;font-weight:normal;">C</div>
<div class="t" style="right:874.1px;top:553.20px;font-size:13px;line-height:13px;color:#000;font-weight:normal;letter-spacing:0.217px;margin-right:-0.217px;">2.932,00</div>
<div class="t" style="left:18px;top:576.95px;font-size:13px;line-height:13px;color:#000;font-weight:normal;">1</div>
<div class="t" style="left:40px;top:576.95px;font-size:13px;line-height:13px;color:#000;font-weight:normal;letter-spacing:0.448px;">0 %</div>
<div class="t" style="right:1298.7px;top:576.95px;font-size:13px;line-height:13px;color:#000;font-weight:normal;letter-spacing:0.260px;margin-right:-0.260px;">700000</div>
<div class="t" style="left:553.3px;top:576.95px;font-size:13px;line-height:13px;color:#000;font-weight:normal;letter-spacing:0.353px;">Verkopen</div>
<div class="t" style="left:797.3px;top:576.95px;font-size:13px;line-height:13px;color:#000;font-weight:normal;">D</div>
<div class="t" style="right:874.1px;top:576.95px;font-size:13px;line-height:13px;color:#000;font-weight:normal;letter-spacing:0.239px;margin-right:-0.239px;">100,00</div>
<div class="t" style="left:18px;top:600.70px;font-size:13px;line-height:13px;color:#000;font-weight:normal;">2</div>
<div class="t" style="left:40px;top:600.70px;font-size:13px;line-height:13px;color:#000;font-weight:normal;letter-spacing:0.448px;">6 %</div>
<div class="t" style="right:1298.7px;top:600.70px;font-size:13px;line-height:13px;color:#000;font-weight:normal;letter-spacing:0.260px;margin-right:-0.260px;">700100</div>
<div class="t" style="left:553.3px;top:600.70px;font-size:13px;line-height:13px;color:#000;font-weight:normal;letter-spacing:0.348px;">Verkopen 6%</div>
<div class="t" style="left:797.3px;top:600.70px;font-size:13px;line-height:13px;color:#000;font-weight:normal;">D</div>
<div class="t" style="right:874.1px;top:600.70px;font-size:13px;line-height:13px;color:#000;font-weight:normal;letter-spacing:0.239px;margin-right:-0.239px;">200,00</div>
<div class="t" style="left:18px;top:624.45px;font-size:13px;line-height:13px;color:#000;font-weight:normal;">3</div>
<div class="t" style="left:40px;top:624.45px;font-size:13px;line-height:13px;color:#000;font-weight:normal;letter-spacing:0.395px;">12 %</div>
<div class="t" style="right:1298.7px;top:624.45px;font-size:13px;line-height:13px;color:#000;font-weight:normal;letter-spacing:0.260px;margin-right:-0.260px;">700200</div>
<div class="t" style="left:553.3px;top:624.45px;font-size:13px;line-height:13px;color:#000;font-weight:normal;letter-spacing:0.346px;">Verkopen 12%</div>
<div class="t" style="left:797.3px;top:624.45px;font-size:13px;line-height:13px;color:#000;font-weight:normal;">D</div>
<div class="t" style="right:874.1px;top:624.45px;font-size:13px;line-height:13px;color:#000;font-weight:normal;letter-spacing:0.239px;margin-right:-0.239px;">300,00</div>
<div class="t" style="left:18px;top:648.20px;font-size:13px;line-height:13px;color:#000;font-weight:normal;">4</div>
<div class="t" style="left:40px;top:648.20px;font-size:13px;line-height:13px;color:#000;font-weight:normal;letter-spacing:0.395px;">21 %</div>
<div class="t" style="right:1298.7px;top:648.20px;font-size:13px;line-height:13px;color:#000;font-weight:normal;letter-spacing:0.260px;margin-right:-0.260px;">700300</div>
<div class="t" style="left:553.3px;top:648.20px;font-size:13px;line-height:13px;color:#000;font-weight:normal;letter-spacing:0.346px;">Verkopen 21%</div>
<div class="t" style="left:797.3px;top:648.20px;font-size:13px;line-height:13px;color:#000;font-weight:normal;">D</div>
<div class="t" style="right:874.1px;top:648.20px;font-size:13px;line-height:13px;color:#000;font-weight:normal;letter-spacing:0.239px;margin-right:-0.239px;">400,00</div>
<div class="t" style="left:18px;top:671.95px;font-size:13px;line-height:13px;color:#000;font-weight:normal;">21</div>
<div class="t" style="left:43.6px;top:671.95px;font-size:13px;line-height:13px;color:#000;font-weight:normal;letter-spacing:0.277px;">Medecontractant</div>
<div class="t" style="right:1298.7px;top:671.95px;font-size:13px;line-height:13px;color:#000;font-weight:normal;letter-spacing:0.260px;margin-right:-0.260px;">700400</div>
<div class="t" style="left:553.3px;top:671.95px;font-size:13px;line-height:13px;color:#000;font-weight:normal;letter-spacing:0.304px;">Verkopen Medecontractant</div>
<div class="t" style="left:797.3px;top:671.95px;font-size:13px;line-height:13px;color:#000;font-weight:normal;">D</div>
<div class="t" style="right:874.1px;top:671.95px;font-size:13px;line-height:13px;color:#000;font-weight:normal;letter-spacing:0.239px;margin-right:-0.239px;">500,00</div>
<div class="t" style="left:18px;top:695.70px;font-size:13px;line-height:13px;color:#000;font-weight:normal;">22</div>
<div class="t" style="left:43.6px;top:695.70px;font-size:13px;line-height:13px;color:#000;font-weight:normal;letter-spacing:0.273px;">Diversen buiten BTW</div>
<div class="t" style="right:1298.7px;top:695.70px;font-size:13px;line-height:13px;color:#000;font-weight:normal;letter-spacing:0.260px;margin-right:-0.260px;">700500</div>
<div class="t" style="left:553.3px;top:695.70px;font-size:13px;line-height:13px;color:#000;font-weight:normal;letter-spacing:0.320px;">Verkopen Buiten BTW</div>
<div class="t" style="left:797.3px;top:695.70px;font-size:13px;line-height:13px;color:#000;font-weight:normal;">D</div>
<div class="t" style="right:874.1px;top:695.70px;font-size:13px;line-height:13px;color:#000;font-weight:normal;letter-spacing:0.239px;margin-right:-0.239px;">600,00</div>
<div class="t" style="left:18px;top:719.45px;font-size:13px;line-height:13px;color:#000;font-weight:normal;">44</div>
<div class="t" style="left:43.6px;top:719.45px;font-size:13px;line-height:13px;color:#000;font-weight:normal;letter-spacing:0.241px;">Artikel 44</div>
<div class="t" style="right:1298.7px;top:719.45px;font-size:13px;line-height:13px;color:#000;font-weight:normal;letter-spacing:0.260px;margin-right:-0.260px;">700600</div>
<div class="t" style="left:553.3px;top:719.45px;font-size:13px;line-height:13px;color:#000;font-weight:normal;letter-spacing:0.290px;">Verkopen 0% Artikel 44</div>
<div class="t" style="left:797.3px;top:719.45px;font-size:13px;line-height:13px;color:#000;font-weight:normal;">D</div>
<div class="t" style="right:874.1px;top:719.45px;font-size:13px;line-height:13px;color:#000;font-weight:normal;letter-spacing:0.239px;margin-right:-0.239px;">700,00</div>
<div class="t" style="left:18px;top:743.20px;font-size:13px;line-height:13px;color:#fff;font-weight:normal;">11</div>
<div class="t" style="left:43.6px;top:743.20px;font-size:13px;line-height:13px;color:#fff;font-weight:normal;letter-spacing:0.578px;">BTW</div>
<div class="t" style="right:1298.7px;top:743.20px;font-size:13px;line-height:13px;color:#fff;font-weight:normal;letter-spacing:0.254px;margin-right:-0.254px;">411000</div>
<div class="t" style="left:553.3px;top:743.20px;font-size:13px;line-height:13px;color:#fff;font-weight:normal;letter-spacing:0.302px;">Terug te vorderen BTW</div>
<div class="t" style="left:797.3px;top:743.20px;font-size:13px;line-height:13px;color:#fff;font-weight:normal;">D</div>
<div class="t" style="right:874.1px;top:743.20px;font-size:13px;line-height:13px;color:#fff;font-weight:normal;letter-spacing:0.239px;margin-right:-0.239px;">132,00</div>
<div class="r" style="left:1215px;top:524px;width:22px;height:277px;background:#f0f0f0;"></div>
<div class="r" style="left:1216px;top:656px;width:19px;height:122px;background:#cdcdcd;"></div>
<svg style="left:1219px;top:531px" width="14" height="9"><path d="M1.5 7.5 L6.5 2.5 L11.5 7.5" fill="none" stroke="#606060" stroke-width="2.2"/></svg>
<svg style="left:1219px;top:784px" width="14" height="9"><path d="M1.5 1.5 L6.5 6.5 L11.5 1.5" fill="none" stroke="#606060" stroke-width="2.2"/></svg>
<div class="r" style="left:16px;top:801px;width:1221px;height:21px;background:#f0f0f0;"></div>
<div class="r" style="left:37px;top:801px;width:22px;height:19px;background:#cdcdcd;"></div>
<svg style="left:21px;top:804px" width="10" height="13"><path d="M7.5 1.5 L2.5 6.5 L7.5 11.5" fill="none" stroke="#606060" stroke-width="2.2"/></svg>
<svg style="left:1200px;top:804px" width="10" height="13"><path d="M2.5 1.5 L7.5 6.5 L2.5 11.5" fill="none" stroke="#606060" stroke-width="2.2"/></svg>
<div class="r" style="left:14px;top:822px;width:1223px;height:1px;background:#fff;"></div>
<div class="r" style="left:14px;top:823px;width:1223px;height:2px;background:#6d6d6d;"></div>
<div class="r" style="left:14px;top:825px;width:2px;height:64px;background:#6d6d6d;"></div>
<div class="t" style="left:36.3px;top:843.00px;font-size:13px;line-height:13px;color:#000;font-weight:normal;letter-spacing:0.176px;">Ventilatie</div>
<div class="t" style="left:187.3px;top:843.00px;font-size:13px;line-height:13px;color:#000;font-weight:normal;letter-spacing:0.203px;">Grootboekrek. D/C</div>
<div class="t" style="left:349.7px;top:843.00px;font-size:13px;line-height:13px;color:#000;font-weight:normal;letter-spacing:0.252px;">Bedrag</div>
<div class="t" style="left:501px;top:843.00px;font-size:13px;line-height:13px;color:#000;font-weight:normal;letter-spacing:0.213px;">Referte</div>
<div class="sk" style="left:37px;top:866px;width:149px;height:27px;background:#fff"><div class="ski"></div></div>
<div class="rs" style="left:163px;top:868px;width:21px;height:23px;background:#f0f0f0"><div class="rsi"></div></div>
<div class="r" style="left:168.5px;top:877.5px;width:0;height:0;border-left:4.5px solid transparent;border-right:4.5px solid transparent;border-top:5px solid #000"></div>
<div class="r" style="left:40px;top:869px;width:121px;height:20px;background:#0078d7;outline:1px dotted #e8a040;outline-offset:-1px"></div>
<div class="t" style="left:43.3px;top:872.00px;font-size:13px;line-height:13px;color:#fff;font-weight:normal;">11</div>
<div class="t" style="left:69.3px;top:872.00px;font-size:13px;line-height:13px;color:#fff;font-weight:normal;letter-spacing:0.578px;">BTW</div>
<div class="sk" style="left:187px;top:866px;width:84px;height:27px;background:#fff"><div class="ski"></div></div>
<div class="t" style="right:1576.7px;top:872.50px;font-size:13px;line-height:13px;color:#000;font-weight:normal;letter-spacing:0.254px;margin-right:-0.254px;">411000</div>
<div class="sk" style="left:274px;top:866px;width:71px;height:27px;background:#fff"><div class="ski"></div></div>
<div class="rs" style="left:322px;top:868px;width:21px;height:23px;background:#f0f0f0"><div class="rsi"></div></div>
<div class="r" style="left:327.5px;top:877.5px;width:0;height:0;border-left:4.5px solid transparent;border-right:4.5px solid transparent;border-top:5px solid #000"></div>
<div class="t" style="left:279px;top:872.50px;font-size:13px;line-height:13px;color:#000;font-weight:normal;letter-spacing:0.260px;">Debet</div>
<div class="sk" style="left:348px;top:866px;width:150px;height:27px;background:#fff"><div class="ski"></div></div>
<div class="t" style="right:1348px;top:872.50px;font-size:13px;line-height:13px;color:#000;font-weight:normal;letter-spacing:0.239px;margin-right:-0.239px;">132,00</div>
<div class="sk" style="left:501px;top:866px;width:460px;height:27px;background:#fff"><div class="ski"></div></div>
<div class="sk" style="left:961px;top:866px;width:80px;height:27px;background:#fff"><div class="ski"></div></div>
<div class="t" style="right:808px;top:872.50px;font-size:13px;line-height:13px;color:#000;font-weight:normal;">0</div>
<div class="sk" style="left:1043px;top:866px;width:80px;height:27px;background:#fff"><div class="ski"></div></div>
<div class="t" style="right:726px;top:872.50px;font-size:13px;line-height:13px;color:#000;font-weight:normal;">0</div>
<div class="r" style="left:1258px;top:162px;width:600px;height:740px;background:#2a2a2a;border-radius:7px 0 0 0"></div>
<div class="r" style="left:1259px;top:163px;width:599px;height:740px;background:#dfe8f2;border-radius:6px 0 0 0"></div>
<div class="r" style="left:1260px;top:164px;width:598px;height:740px;background:linear-gradient(#bccbdc 0px,#c9d7e6 18px,#d6e3f1 36px,#d8e4f1 60px);border-radius:5px 0 0 0"></div>
<div class="r" style="left:1269px;top:200px;width:575px;height:689px;background:#f0f0f0;"></div>
<div class="r" style="left:1269px;top:200px;width:1px;height:689px;background:#fafafa;"></div>
<div class="r" style="left:1271px;top:175px;width:20px;height:20px;background:#0878c6;"></div>
<svg style="left:1277px;top:180px" width="9" height="10"><path d="M0 0 H1.5 V1.8 H2.6 V0 H7 L8 1 V8.8 Q4 7.6 0 8.8 Z" fill="#fff"/></svg>
<div class="t" style="left:1296.8px;top:178.36px;font-size:14.7px;line-height:14.7px;color:#a3a9b1;font-weight:normal;letter-spacing:0.185px;">Verkoopdocumenten</div>
<div class="r" style="left:1734px;top:174px;width:40px;height:22px;background:linear-gradient(#dae5f1 0%,#cfdcec 45%,#bccee4 50%,#c9d8ea 100%);border:1px solid #8e9db3;border-radius:3px;box-shadow:inset 0 0 0 1px rgba(255,255,255,0.45)"></div>
<div class="r" style="left:1747.5px;top:183.7px;width:13.5px;height:6px;background:linear-gradient(#fff,#dcdcdc);border:1.3px solid #4a5060;border-radius:1.5px"></div>
<div class="r" style="left:1776px;top:174px;width:40px;height:22px;background:linear-gradient(#dae5f1 0%,#cfdcec 45%,#bccee4 50%,#c9d8ea 100%);border:1px solid #8e9db3;border-radius:3px;box-shadow:inset 0 0 0 1px rgba(255,255,255,0.45)"></div>
<div class="r" style="left:1788.5px;top:178.8px;width:13.5px;height:10.8px;background:linear-gradient(#fff,#dcdcdc);border:1.3px solid #4a5060;border-radius:1.5px"></div>
<div class="r" style="left:1791.8px;top:182.2px;width:6.5px;height:3.6px;background:#8fa4c0;border:1px solid #4a5060"></div>
<div class="r" style="left:1819px;top:174px;width:40px;height:22px;background:linear-gradient(#dae5f1 0%,#cfdcec 45%,#bccee4 50%,#c9d8ea 100%);border:1px solid #8e9db3;border-radius:3px;box-shadow:inset 0 0 0 1px rgba(255,255,255,0.45)"></div>
<svg style="left:1830.5px;top:178.0px" width="17" height="13"><path d="M4.2 2.8 L12.8 9.8 M12.8 2.8 L4.2 9.8" stroke="#3c3c48" stroke-width="5.2" stroke-linecap="round"/><path d="M4.2 2.8 L12.8 9.8 M12.8 2.8 L4.2 9.8" stroke="#ececec" stroke-width="3.2" stroke-linecap="round"/></svg>
<div class="r" style="left:1446px;top:227px;width:398px;height:1px;background:#fff;"></div>
<div class="r" style="left:1270px;top:201px;width:176px;height:27px;border-left:1px solid #fff;border-top:1px solid #fff;border-right:2px solid #7a7a7a;border-radius:0 2px 0 0;background:#f0f0f0"></div>
<div class="t" style="left:1279.4px;top:206.40px;font-size:13px;line-height:13px;color:#000;font-weight:normal;letter-spacing:0.289px;">Overzicht documenten (1)</div>
<div class="r" style="left:1274px;top:232px;width:570px;height:115px;border-left:2px solid #6d6d6d;border-top:2px solid #6d6d6d;background:#fff"></div>
<div class="r" style="left:1274px;top:346px;width:570px;height:1px;background:#fff;"></div>
<div class="r" style="left:1276px;top:234px;width:514px;height:22px;background:#f0f0f0;"></div>
<div class="r" style="left:1276px;top:234px;width:514px;height:1px;background:#fff;"></div>
<div class="r" style="left:1276px;top:255px;width:514px;height:1px;background:#c8c8c8;"></div>
<div class="r" style="left:1276px;top:256px;width:515px;height:1px;background:#141414;"></div>
<div class="r" style="left:1589px;top:234px;width:1px;height:22px;background:#141414;"></div>
<div class="r" style="left:1588px;top:235px;width:1px;height:20px;background:#c8c8c8;"></div>
<div class="r" style="left:1790px;top:234px;width:1px;height:23px;background:#141414;"></div>
<div class="t" style="left:1279.5px;top:239.00px;font-size:13px;line-height:13px;color:#000;font-weight:normal;letter-spacing:0.315px;">Bestandsnaam</div>
<div class="t" style="left:1592.5px;top:239.00px;font-size:13px;line-height:13px;color:#000;font-weight:normal;letter-spacing:0.301px;">Bestandsdatum</div>
<div class="r" style="left:1276px;top:257px;width:514px;height:24px;background:#0078d7;"></div>
<div class="r" style="left:1589px;top:257px;width:1px;height:24px;background:#9ab8d8;"></div>
<div class="t" style="left:1279.5px;top:263.50px;font-size:13px;line-height:13px;color:#fff;font-weight:normal;letter-spacing:0.292px;">TestUBL-Verkopen-Binnenland-Creditnota.xml</div>
<div class="t" style="left:1592.5px;top:263.50px;font-size:13px;line-height:13px;color:#fff;font-weight:normal;letter-spacing:0.270px;">12/05/2020 16:18</div>
<div class="r" style="left:1834px;top:234px;width:10px;height:112px;background:#f0f0f0;"></div>
<div class="r" style="left:1834px;top:256px;width:10px;height:20px;background:#cdcdcd;"></div>
<svg style="left:1836px;top:240px" width="14" height="9"><path d="M1.5 7.5 L6.5 2.5 L11.5 7.5" fill="none" stroke="#606060" stroke-width="2.2"/></svg>
<svg style="left:1836px;top:331px" width="14" height="9"><path d="M1.5 1.5 L6.5 6.5 L11.5 1.5" fill="none" stroke="#606060" stroke-width="2.2"/></svg>
<div class="t" style="left:1298.8px;top:366.15px;font-size:14px;line-height:14px;color:#000;font-weight:normal;letter-spacing:0.417px;">Bijlage koppelen</div>
<div class="sk" style="left:1416px;top:359px;width:180px;height:27px;background:#fff"><div class="ski"></div></div>
<div class="rs" style="left:1573px;top:361px;width:21px;height:23px;background:#f0f0f0"><div class="rsi"></div></div>
<div class="r" style="left:1578.5px;top:370.5px;width:0;height:0;border-left:4.5px solid transparent;border-right:4.5px solid transparent;border-top:5px solid #000"></div>
<div class="t" style="left:1422px;top:365.50px;font-size:13px;line-height:13px;color:#000;font-weight:normal;letter-spacing:0.244px;">Ja - zonder bevestiging</div>
<div class="r" style="left:1275px;top:395px;width:569px;height:38px;background:#fbfbfc;"></div>
<div class="r" style="left:1276px;top:397px;width:580px;height:36px;border:1px solid #c9ccd3;border-radius:4px;background:linear-gradient(#ffffff,#f1f2f6);box-shadow:inset 1px 1px 0 #fff"></div>
<svg style="left:1286px;top:405px" width="18" height="18"><rect x="0" y="0" width="18" height="18" rx="2" fill="#2b3440"/><rect x="4" y="1.5" width="9" height="6" fill="#e6eaf0"/><rect x="10" y="2.5" width="2" height="3.5" fill="#2b3440"/><rect x="3" y="10" width="12" height="7" fill="#fff"/><rect x="3" y="13.5" width="12" height="3.5" fill="#5aa0dc"/></svg>
<svg style="left:1317px;top:408px" width="19" height="14"><rect x="0.5" y="0.5" width="18" height="13" fill="#f4f6fb" stroke="#7a8fcc"/><path d="M0.5 0.5 L9.5 8 L18.5 0.5" fill="none" stroke="#7a8fcc"/></svg>
<svg style="left:1349px;top:406px" width="20" height="15"><path d="M2 3 Q3 0 6 0 Q8 0 8 3 L8 8 L12 8 L12 3 Q12 0 14 0 Q17 0 18 3 L20 10 A4.5 4.5 0 1 1 11 11 L9 11 A4.5 4.5 0 1 1 0 10 Z" fill="#3d4f8f"/><circle cx="4.5" cy="10.5" r="2.6" fill="#e8ecf6"/><circle cx="15.5" cy="10.5" r="2.6" fill="#e8ecf6"/><circle cx="4.5" cy="10.5" r="1.3" fill="#4a7fd0"/><circle cx="15.5" cy="10.5" r="1.3" fill="#4a7fd0"/></svg>
<svg style="left:1383px;top:406px" width="18" height="16"><rect x="0.5" y="1" width="2.5" height="14" fill="#5b9ae0" stroke="#3a78c8" stroke-width="0.8"/><path d="M16.5 0.5 L16.5 15.5 L4.5 8 Z" fill="#7ab4ee" stroke="#3a78c8" stroke-width="1"/></svg>
<svg style="left:1415px;top:404px" width="20" height="20"><circle cx="10" cy="10" r="9.6" fill="#c6c6c6" stroke="#bdbdbd"/><path d="M10 4 L15 9.5 L12.2 9.5 L12.2 15 L7.8 15 L7.8 9.5 L5 9.5 Z" fill="#dedede" stroke="#b0b0b0" stroke-width="0.8"/></svg>
<svg style="left:1447.5px;top:404px" width="20" height="20"><circle cx="10" cy="10" r="9.6" fill="#c6c6c6" stroke="#bdbdbd"/><path d="M10 16 L15 10.5 L12.2 10.5 L12.2 5 L7.8 5 L7.8 10.5 L5 10.5 Z" fill="#dedede" stroke="#b0b0b0" stroke-width="0.8"/></svg>
<svg style="left:1482px;top:406px" width="18" height="16"><path d="M1.5 0.5 L1.5 15.5 L13.5 8 Z" fill="#7ab4ee" stroke="#3a78c8" stroke-width="1"/><rect x="15" y="1" width="2.5" height="14" fill="#5b9ae0" stroke="#3a78c8" stroke-width="0.8"/></svg>
<div class="r" style="left:1511px;top:402px;width:63px;height:25px;background:#fff;border:1px solid #a9aeb8;border-top-color:#8e939c"></div>
<div class="t" style="left:1543px;transform:translateX(-50%);top:407.27px;font-size:13.5px;line-height:13.5px;color:#000;font-weight:normal;">1</div>
<div class="t" style="left:1577.8px;top:406.85px;font-size:14px;line-height:14px;color:#000;font-weight:normal;letter-spacing:0.349px;">of 1</div>
<svg style="left:1614px;top:403px" width="21" height="21"><defs><radialGradient id="g1614" cx="0.4" cy="0.35" r="0.7"><stop offset="0" stop-color="#e8f0fc"/><stop offset="1" stop-color="#6f94d6"/></radialGradient></defs><path d="M12.5 12.5 L19 19" stroke="#c9752c" stroke-width="3.2" stroke-linecap="round"/><circle cx="8" cy="8" r="7" fill="url(#g1614)" stroke="#5875b8" stroke-width="1.3"/><path d="M4.5 8 H11.5" stroke="#23408c" stroke-width="1.6"/></svg>
<svg style="left:1646px;top:403px" width="21" height="21"><defs><radialGradient id="g1646" cx="0.4" cy="0.35" r="0.7"><stop offset="0" stop-color="#e8f0fc"/><stop offset="1" stop-color="#6f94d6"/></radialGradient></defs><path d="M12.5 12.5 L19 19" stroke="#c9752c" stroke-width="3.2" stroke-linecap="round"/><circle cx="8" cy="8" r="7" fill="url(#g1646)" stroke="#5875b8" stroke-width="1.3"/><path d="M4.5 8 H11.5 M8 4.5 V11.5" stroke="#23408c" stroke-width="1.6"/></svg>
<svg style="left:1679px;top:403px" width="21" height="21"><defs><radialGradient id="g1679" cx="0.4" cy="0.35" r="0.7"><stop offset="0" stop-color="#e8f0fc"/><stop offset="1" stop-color="#6f94d6"/></radialGradient></defs><path d="M12.5 12.5 L19 19" stroke="#c9752c" stroke-width="3.2" stroke-linecap="round"/><circle cx="8" cy="8" r="7" fill="url(#g1679)" stroke="#5875b8" stroke-width="1.3"/></svg>
<div class="r" style="left:1702.5px;top:411.5px;width:0;height:0;border-left:3.5px solid transparent;border-right:3.5px solid transparent;border-top:4px solid #1a1a1a"></div>
<div class="r" style="left:1275px;top:433px;width:559px;height:16px;background:linear-gradient(#f4f4f6,#e2e3e8);"></div>
<div class="r" style="left:1275px;top:448px;width:559px;height:1px;background:#a8acb4;"></div>
<div class="r" style="left:1275px;top:449px;width:559px;height:6px;background:#d3dcf0;"></div>
<div class="r" style="left:1275px;top:455px;width:559px;height:422px;background:#fff;"></div>
<div class="r" style="left:1704px;top:834px;width:130px;height:4px;background:#000;"></div>
<div class="r" style="left:1704px;top:834px;width:4px;height:43px;background:#000;"></div>
<svg style="left:1770px;top:872px" width="70" height="6"><path d="M4.5 1 L8 6 M27 1 L25 6 M32 1 L31 6 M63 1 L58 5.5" stroke="#000" stroke-width="3.2"/></svg>
<div class="r" style="left:1834px;top:433px;width:10px;height:456px;background:#f0f0f0;"></div>
<div class="r" style="left:1840px;top:455px;width:4px;height:50px;background:#e0e0e0;border:1px solid #b8b8b8;border-radius:3px"></div>
<div class="r" style="left:1275px;top:877px;width:559px;height:12px;background:#f2f2f4;"></div>
<div class="r" style="left:1492px;top:882px;width:123px;height:9px;background:#e6e6e8;border:1px solid #b6b6ba;border-radius:3px"></div>
<div class="r" style="left:1838.0px;top:863.0px;width:0;height:0;border-left:3.0px solid transparent;border-right:3.0px solid transparent;border-top:4px solid #888"></div>
<svg style="left:1820px;top:882px" width="8" height="8"><path d="M1 1 L6 4.5 L1 8 Z" fill="#999"/></svg></body></html>
